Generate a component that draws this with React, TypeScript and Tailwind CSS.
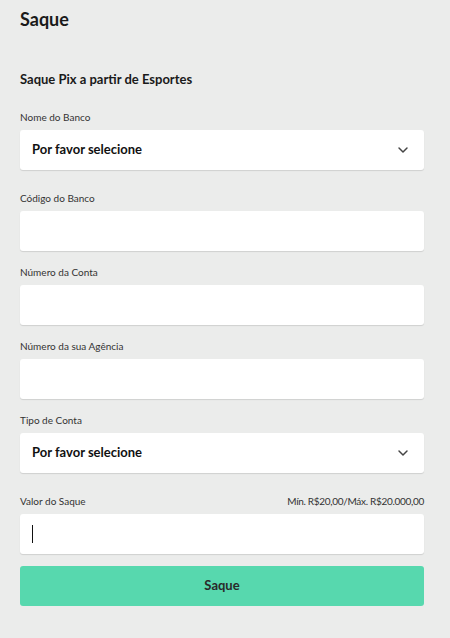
import { ChevronDown } from 'lucide-react'

function Label({ children, hint }: { children: string; hint?: string }) {
  return (
    <div className="mb-[6px] flex items-center justify-between text-[10px] leading-[13px] text-[#333]">
      <span>{children}</span>
      {hint && <span className="tracking-[-0.3px]">{hint}</span>}
    </div>
  )
}

function SelectField({ label }: { label: string }) {
  return (
    <div className="mb-[22px]">
      <Label>{label}</Label>
      <div className="flex h-[40px] items-center justify-between rounded-[3px] bg-white pl-[12px] pr-[13px] shadow-[0_1px_1px_rgba(0,0,0,0.12)]">
        <span className="text-[13px] font-bold text-[#111]">Por favor selecione</span>
        <ChevronDown size={16} strokeWidth={2.2} className="text-[#444]" />
      </div>
    </div>
  )
}

function TextField({ label, hint, cursor, last }: { label: string; hint?: string; cursor?: boolean; last?: boolean }) {
  return (
    <div className={last ? 'mb-[12px]' : 'mb-[15px]'}>
      <Label hint={hint}>{label}</Label>
      <div className="flex h-[40px] items-center rounded-[3px] bg-white pl-[12px] shadow-[0_1px_1px_rgba(0,0,0,0.12)]">
        {cursor && <span className="h-[18px] w-px bg-[#111]" />}
      </div>
    </div>
  )
}

export default function App() {
  return (
    <div className="min-h-[638px] bg-[#ebeceb] pl-[20px] pr-[26px] pt-[8px] font-['Lato','Noto_Sans',sans-serif]">
      <h1 className="text-[18px] font-bold leading-[22px] text-[#1a1a1a]">Saque</h1>
      <h2 className="mt-[41px] text-[13px] font-bold leading-[16px] text-[#1a1a1a]">
        Saque Pix a partir de Esportes
      </h2>
      <div className="mt-[24px]">
        <SelectField label="Nome do Banco" />
        <TextField label="Código do Banco" />
        <TextField label="Número da Conta" />
        <TextField label="Número da sua Agência" />
        <SelectField label="Tipo de Conta" />
        <TextField label="Valor do Saque" hint="Mín. R$20,00/Máx. R$20.000,00" cursor last />
        <button className="h-[40px] w-full rounded-[3px] bg-[#57d8ae] text-[13px] font-bold text-[#2a2a2a]">
          Saque
        </button>
      </div>
    </div>
  )
}
